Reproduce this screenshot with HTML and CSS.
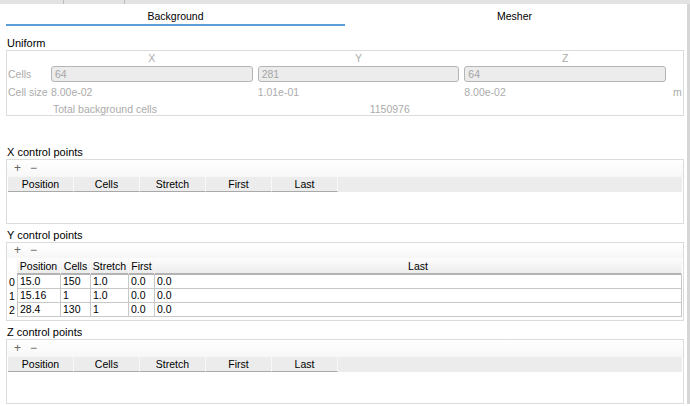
FILE: index.html
```html
<!DOCTYPE html>
<html lang="en">
<head>
    <meta charset="UTF-8">
    <title>Background mesh</title>
    <link rel="stylesheet" href="styles.css">
</head>
<body>
    <div class="topbar">
        <span class="sep first"></span>
        <span class="sep"></span>
    </div>
    <div class="window">
        <div class="tabs">
            <div class="tab active">Background</div>
            <div class="tab">Mesher</div>
        </div>

        <div class="group-title top">Uniform</div>
        <div class="box uniform">
            <div></div>
            <div class="axis">X</div>
            <div class="axis">Y</div>
            <div class="axis">Z</div>
            <div></div>

            <div class="row-label">Cells</div>
            <input type="text" value="64" disabled>
            <input type="text" value="281" disabled>
            <input type="text" value="64" disabled>
            <div></div>

            <div class="row-label">Cell size</div>
            <div>8.00e-02</div>
            <div>1.01e-01</div>
            <div>8.00e-02</div>
            <div class="unit">m</div>

            <div></div>
            <div class="total-label">Total background cells</div>
            <div class="total-value">1150976</div>
        </div>

        <div class="group-title x-title">X control points</div>
        <div class="box points">
            <div class="toolbar"><span class="plus">+</span><span class="minus">&minus;</span></div>
            <div class="grid-header">
                <div class="col">Position</div>
                <div class="col">Cells</div>
                <div class="col">Stretch</div>
                <div class="col">First</div>
                <div class="col">Last</div>
                <div class="filler"></div>
            </div>
            <div class="empty"></div>
        </div>

        <div class="group-title y-title">Y control points</div>
        <div class="box points y-box">
            <div class="toolbar short"><span class="plus">+</span><span class="minus">&minus;</span></div>
            <table class="ytable">
                <colgroup>
                    <col style="width: 9px">
                    <col style="width: 44px">
                    <col style="width: 30px">
                    <col style="width: 38px">
                    <col style="width: 26px">
                    <col>
                </colgroup>
                <thead>
                    <tr>
                        <th class="corner"></th>
                        <th>Position</th>
                        <th>Cells</th>
                        <th>Stretch</th>
                        <th>First</th>
                        <th>Last</th>
                    </tr>
                </thead>
                <tbody>
                    <tr>
                        <td class="rownum">0</td>
                        <td class="first-cell">15.0</td>
                        <td>150</td>
                        <td>1.0</td>
                        <td>0.0</td>
                        <td>0.0</td>
                    </tr>
                    <tr>
                        <td class="rownum">1</td>
                        <td class="first-cell">15.16</td>
                        <td>1</td>
                        <td>1.0</td>
                        <td>0.0</td>
                        <td>0.0</td>
                    </tr>
                    <tr>
                        <td class="rownum">2</td>
                        <td class="first-cell">28.4</td>
                        <td>130</td>
                        <td>1</td>
                        <td>0.0</td>
                        <td>0.0</td>
                    </tr>
                </tbody>
            </table>
        </div>

        <div class="group-title z-title">Z control points</div>
        <div class="box points">
            <div class="toolbar"><span class="plus">+</span><span class="minus">&minus;</span></div>
            <div class="grid-header">
                <div class="col">Position</div>
                <div class="col">Cells</div>
                <div class="col">Stretch</div>
                <div class="col">First</div>
                <div class="col">Last</div>
                <div class="filler"></div>
            </div>
            <div class="empty"></div>
        </div>
    </div>
</body>
</html>
```

FILE: styles.css
```css
body {
    margin: 0;
    font-family: "Liberation Sans", Arial, sans-serif;
    font-size: 10.5px;
    color: #000;
    background-color: #fff;
}

/* what is left of the outer tab bar */
.topbar {
    display: flex;
    height: 4px;
    background-color: #e3e3e3;
}

.sep {
    width: 1px;
    margin-left: 60px;
    background-color: #bcbcbc;
}

.sep.first {
    margin-left: 63px;
}

.window {
    padding: 0 3px 0 6px;
    border-right: 3px solid #d6d6d6;
}

.tabs {
    display: flex;
}

.tab {
    flex: 1;
    height: 16px;
    padding-top: 4px;
    line-height: 16px;
    text-align: center;
    font-size: 10.5px;
    border-bottom: 2px solid transparent;
}

.tab.active {
    border-bottom-color: #5c9fd8; /* blue underline */
}

.group-title {
    line-height: 14px;
    padding-left: 1px;
    font-size: 11px;
}

.group-title.top {
    margin-top: 10px;
}

.x-title {
    margin-top: 29px;
}

.y-title {
    margin-top: 4px;
}

.z-title {
    margin-top: 4px;
}

.box {
    border: 1px solid #dcdcdc;
}

/* uniform block, all disabled */
.uniform {
    display: grid;
    grid-template-columns: 38px 1fr 1fr 1fr 12px;
    grid-template-rows: 13px 16px 16px 13px;
    column-gap: 5px;
    row-gap: 2px;
    align-items: center;
    padding-left: 1px;
    color: #ababab;
}

.row-label {
    white-space: nowrap;
}

.axis {
    text-align: center;
}

.uniform input {
    height: 16px;
    box-sizing: border-box;
    padding: 0 3px;
    border: 1px solid #b5b5b5;
    border-radius: 3px;
    background-color: #ececec;
    color: #a5a5a5;
    font-family: inherit;
    font-size: 10.5px;
}

.unit {
    padding-left: 2px;
}

.total-label {
    padding-left: 2px;
    white-space: nowrap;
}

.total-value {
    padding-left: 112px;
}

/* control point tables */
.toolbar {
    height: 17px;
    line-height: 17px;
    padding-left: 7px;
    font-size: 12px;
    color: #666;
    background: linear-gradient(#fff, #f7f7f7);
}

.toolbar.short {
    height: 15px;
    line-height: 15px;
}

.minus {
    margin-left: 9px;
}

.grid-header {
    display: flex;
    height: 15px;
    margin: 0 1px;
    background-color: #ececec;
}

.col {
    width: 65px;
    height: 14px;
    line-height: 14px;
    text-align: center;
    border-right: 1px solid #f8f8f8;
    border-bottom: 1px solid #a9a9a9;
}

.filler {
    flex: 1;
}

.empty {
    height: 31px;
}

.y-box {
    padding-bottom: 3px;
}

.ytable {
    width: 674px;
    margin-left: 1px;
    border-collapse: separate;
    border-spacing: 0;
    table-layout: fixed;
    font-size: 10.5px;
}

.ytable th {
    height: 15px;
    padding: 0;
    font-weight: normal;
    vertical-align: bottom;
    line-height: 14px;
    background: linear-gradient(#fdfdfd, #ececec);
    border-right: 1px solid #f6f6f6;
    border-bottom: 2px solid #b3b3b3;
}

.ytable th.corner {
    background: #fff;
    border-bottom: none;
    border-right: none;
}

.ytable td {
    height: 13px;
    padding: 0 2px;
    line-height: 13px;
    white-space: nowrap;
    overflow: hidden;
    border-right: 1px solid #c8c8c8;
    border-bottom: 1px solid #c8c8c8;
}

.ytable td.first-cell {
    border-left: 1px solid #c8c8c8;
}

.ytable td.rownum {
    padding: 0 0 0 1px;
    vertical-align: bottom;
    border: none;
}
```
